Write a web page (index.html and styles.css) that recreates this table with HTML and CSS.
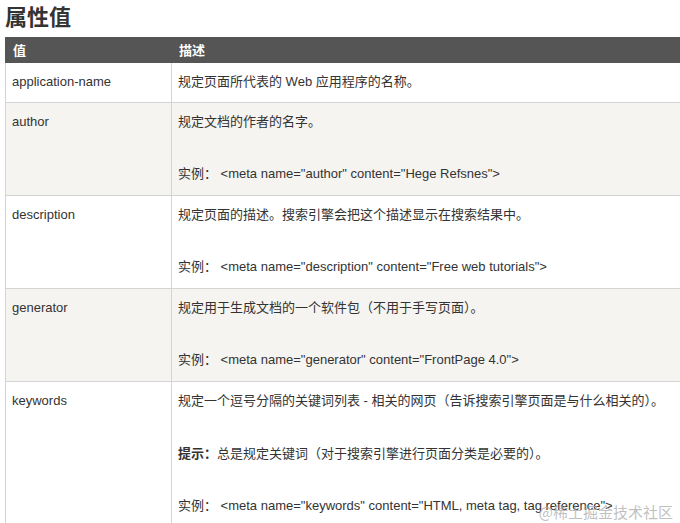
FILE: index.html
```html
<!DOCTYPE html>
<html lang="zh">
<head>
<meta charset="utf-8">
<link rel="stylesheet" href="styles.css">
</head>
<body>
<div class="page">
  <h2 class="title">属性值</h2>
  <div class="table-wrap">
    <table class="ref">
      <thead>
        <tr><th class="c1">值</th><th>描述</th></tr>
      </thead>
      <tbody>
        <tr class="single">
          <td class="c1">application-name</td>
          <td>规定页面所代表的 Web 应用程序的名称。</td>
        </tr>
        <tr class="alt">
          <td class="c1">author</td>
          <td><p>规定文档的作者的名字。</p><p>实例： &lt;meta name="author" content="Hege Refsnes"&gt;</p></td>
        </tr>
        <tr>
          <td class="c1">description</td>
          <td><p>规定页面的描述。搜索引擎会把这个描述显示在搜索结果中。</p><p>实例： &lt;meta name="description" content="Free web tutorials"&gt;</p></td>
        </tr>
        <tr class="alt">
          <td class="c1">generator</td>
          <td><p>规定用于生成文档的一个软件包（不用于手写页面）。</p><p>实例： &lt;meta name="generator" content="FrontPage 4.0"&gt;</p></td>
        </tr>
        <tr>
          <td class="c1">keywords</td>
          <td><p>规定一个逗号分隔的关键词列表 - 相关的网页（告诉搜索引擎页面是与什么相关的）。</p><p><b>提示：</b>总是规定关键词（对于搜索引擎进行页面分类是必要的）。</p><p>实例： &lt;meta name="keywords" content="HTML, meta tag, tag reference"&gt;</p></td>
        </tr>
      </tbody>
    </table>
  </div>
</div>
<div class="watermark">@稀土掘金技术社区</div>
</body>
</html>
```
FILE: styles.css
```css
html, body {
  margin: 0;
  padding: 0;
  background: #fff;
  overflow: hidden;
}
body {
  font-family: "Liberation Sans", Arial, "Noto Sans CJK SC", sans-serif;
  font-size: 13px;
  color: #333;
  width: 680px;
  height: 523px;
  position: relative;
}
.page {
  padding: 0 0 0 5px;
}
.title {
  margin: 0 0 7px 0;
  font-family: "Noto Sans CJK SC", sans-serif;
  font-size: 22px;
  line-height: 30px;
  font-weight: bold;
  color: #333;
}
.table-wrap {
  overflow: hidden;
}
.ref {
  border-collapse: collapse;
  width: 720px;
  table-layout: fixed;
}
.ref th {
  background: #555;
  color: #fff;
  text-align: left;
  font-family: "Noto Sans CJK SC", sans-serif;
  font-weight: bold;
  font-size: 13px;
  line-height: 20px;
  padding: 2px 7px 2px 7px;
  border: 1px solid #555;
  height: 20px;
}
.ref th.c1, .ref td.c1 {
  width: 151px;
}
.ref td {
  border: 1px solid #d4d4d4;
  vertical-align: top;
  padding: 9px 6px 11px 6px;
  line-height: 20px;
}
.ref tr.single td {
  padding-bottom: 10px;
}
.ref tr.alt td {
  background: #f6f4f0;
}
.ref td p {
  margin: 0;
}
.ref td p + p {
  margin-top: 32px;
}
.ref td b {
  font-family: "Noto Sans CJK SC", sans-serif;
  font-weight: bold;
}
.watermark {
  position: absolute;
  right: 7px;
  bottom: 1px;
  font-family: "Noto Sans CJK SC", sans-serif;
  font-size: 15px;
  color: rgba(170, 170, 170, 0.75);
}
```
